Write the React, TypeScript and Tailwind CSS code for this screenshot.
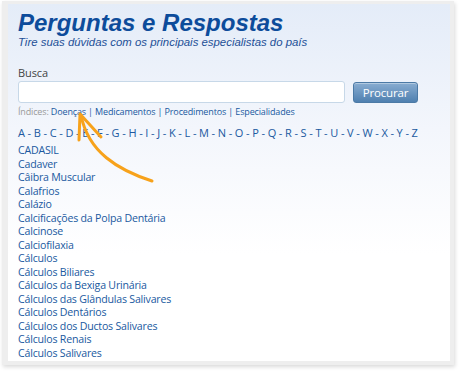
import React from "react";

const items = [
  "CADASIL",
  "Cadaver",
  "Câibra Muscular",
  "Calafrios",
  "Calázio",
  "Calcificações da Polpa Dentária",
  "Calcinose",
  "Calciofilaxia",
  "Cálculos",
  "Cálculos Biliares",
  "Cálculos da Bexiga Urinária",
  "Cálculos das Glândulas Salivares",
  "Cálculos Dentários",
  "Cálculos dos Ductos Salivares",
  "Cálculos Renais",
  "Cálculos Salivares",
];

const letters = "ABCDEFGHIJKLMNOPQRSTUVWXYZ".split("");

export default function App() {
  return (
    <div className="relative w-[459px] h-[372px] bg-white">
      <div className="absolute left-[2px] top-[1px] w-[452px] h-[364px] bg-[#eeeeee] shadow-[1px_2px_4px_rgba(0,0,0,0.15)] pl-[6px] pt-[3px] pr-[4px] pb-[4px]">
        <div className="w-full h-full bg-[linear-gradient(to_bottom,#e4ecf8,#f3f6fc_35%,#ffffff_70%)] pl-[10px] pt-[6px] font-['Open_Sans',sans-serif]">
          <h1 className="font-['Liberation_Sans',Arial,sans-serif] font-bold italic text-[24px] leading-[26px] text-[#0d4c9b]">
            Perguntas e Respostas
          </h1>
          <p className="font-['Liberation_Sans',Arial,sans-serif] italic text-[11.4px] leading-[14px] text-[#1d4f97] -mt-[1px]">
            Tire suas dúvidas com os principais especialistas do país
          </p>
          <div className="mt-[17px] text-[#444] text-[11px] leading-[14px] tracking-[-0.1px]">Busca</div>
          <div className="flex items-center gap-[8px] mt-[1px]">
            <input className="w-[327px] h-[22px] border border-[#c7d8e8] rounded-[3px] bg-white outline-none" />
            <button className="w-[65px] h-[21px] rounded-[3px] border border-[#4c7aa6] bg-gradient-to-b from-[#89add1] to-[#4f80b0] text-white text-[11.5px] tracking-[-0.2px] leading-[19px] shadow-[inset_0_1px_0_rgba(255,255,255,0.35)]">
              Procurar
            </button>
          </div>
          <div className="mt-[2px] text-[9px] tracking-[-0.15px] leading-[14px] text-[#999]">
            Índices: <span className="text-[#2059a0]">Doenças</span>{" "}
            <span className="text-[#2059a0]">|</span>{" "}
            <span className="text-[#2059a0]">Medicamentos</span>{" "}
            <span className="text-[#2059a0]">|</span>{" "}
            <span className="text-[#2059a0]">Procedimentos</span>{" "}
            <span className="text-[#2059a0]">|</span>{" "}
            <span className="text-[#2059a0]">Especialidades</span>
          </div>
          <div className="mt-[7px] flex w-[400px] justify-between text-[#2059a0] text-[11px] leading-[14px]">
            {letters.map((l, i) => (
              <React.Fragment key={l}>
                <span>{l}</span>
                {i < letters.length - 1 && <span>-</span>}
              </React.Fragment>
            ))}
          </div>
          <ul className="mt-[4px] text-[#2059a0] text-[10.6px] tracking-[-0.2px] leading-[13.5px]">
            {items.map((it) => (
              <li key={it}>{it}</li>
            ))}
          </ul>
        </div>
      </div>
      <svg className="absolute left-0 top-0 pointer-events-none" width="459" height="372">
        <path
          d="M152 181 C 118 170, 88 152, 81 115"
          fill="none"
          stroke="#f7a21b"
          strokeWidth="3"
          strokeLinecap="round"
        />
        <path
          d="M79 140 L 80 114 L 101 137"
          fill="none"
          stroke="#f7a21b"
          strokeWidth="3"
          strokeLinecap="round"
          strokeLinejoin="round"
        />
      </svg>
    </div>
  );
}
